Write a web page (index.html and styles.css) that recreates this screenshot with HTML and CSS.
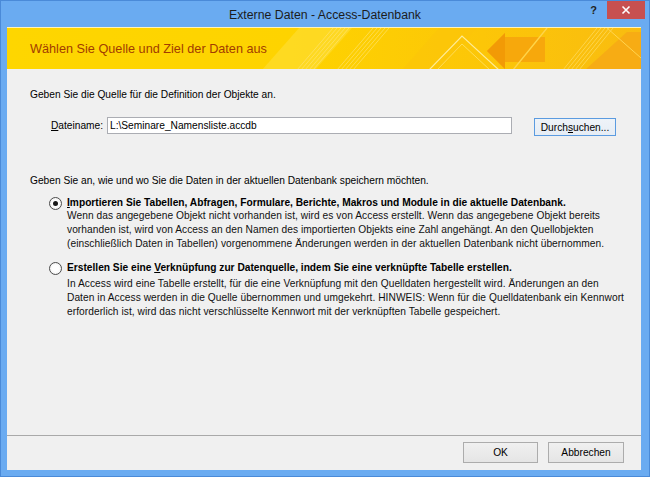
FILE: index.html
```html
<!DOCTYPE html>
<html lang="de">
<head>
<meta charset="utf-8">
<title>Externe Daten - Access-Datenbank</title>
<link rel="stylesheet" href="styles.css">
</head>
<body>
<div class="window">
  <div class="titlebar">
    <div class="title">Externe Daten - Access-Datenbank</div>
    <div class="controls">
      <span class="help">?</span>
      <span class="close"><svg width="10" height="10" viewBox="0 0 10 10"><path d="M1.5 1.5 L8.5 8.5 M8.5 1.5 L1.5 8.5" stroke="#fff" stroke-width="1.6" fill="none"/></svg></span>
    </div>
  </div>
  <div class="client">
    <div class="banner">
      <svg class="banner-art" width="634" height="42" viewBox="0 0 634 42">
        <defs>
          <linearGradient id="bg" x1="0" x2="1" y1="0" y2="0">
            <stop offset="0" stop-color="#fed600"/>
            <stop offset="0.45" stop-color="#fed300"/>
            <stop offset="0.75" stop-color="#fcc608"/>
            <stop offset="1" stop-color="#f9bc10"/>
          </linearGradient>
        </defs>
        <rect width="634" height="42" fill="url(#bg)"/>
        <polygon points="255,42 292,0 345,0 308,42" fill="#ffe24a" opacity="0.45"/>
        <g stroke="#ffe577" stroke-width="0.8" opacity="0.8">
          <line x1="290" y1="42" x2="326" y2="0"/>
          <line x1="294" y1="42" x2="330" y2="0"/>
          <line x1="298" y1="42" x2="334" y2="0"/>
          <line x1="302" y1="42" x2="338" y2="0"/>
          <line x1="306" y1="42" x2="342" y2="0"/>
          <line x1="330" y1="42" x2="366" y2="0"/>
          <line x1="334" y1="42" x2="370" y2="0"/>
          <line x1="338" y1="42" x2="374" y2="0"/>
          <line x1="342" y1="42" x2="378" y2="0"/>
          <line x1="346" y1="42" x2="382" y2="0"/>
        </g>
        <polygon points="395,42 432,0 470,0 433,42" fill="#fbc40a" opacity="0.5"/>
        <polyline points="422,42 455,8 492,42" fill="none" stroke="#ffec96" stroke-width="1.2"/>
        <polyline points="430,42 455,16 483,42" fill="none" stroke="#ffe36a" stroke-width="0.8"/>
        <polygon points="480,23 498,5 498,9 538,9 538,34 498,34 498,41" fill="#f7a80c"/>
        <polygon points="480,23 498,5 498,41" fill="#f29a06"/>
        <line x1="506" y1="42" x2="540" y2="0" stroke="#ffd54a" stroke-width="1.4"/>
        <g stroke="#ffe06a" stroke-width="0.8" opacity="0.85">
          <line x1="556" y1="42" x2="590" y2="0"/>
          <line x1="560" y1="42" x2="594" y2="0"/>
          <line x1="564" y1="42" x2="598" y2="0"/>
          <line x1="568" y1="42" x2="602" y2="0"/>
          <line x1="572" y1="42" x2="606" y2="0"/>
        </g>
        <polygon points="578,42 620,4 634,4 634,42" fill="#f7ac14"/>
        <line x1="600" y1="0" x2="634" y2="30" stroke="#ffd450" stroke-width="1"/>
      </svg>
      <h1 class="banner-title">Wählen Sie Quelle und Ziel der Daten aus</h1>
    </div>

    <div class="content">
      <p class="intro">Geben Sie die Quelle für die Definition der Objekte an.</p>
      <div class="file-row">
        <label class="file-label"><u>D</u>ateiname:</label>
        <div class="file-input">L:\Seminare_Namensliste.accdb</div>
        <button class="btn btn-browse">Durch<u>s</u>uchen...</button>
      </div>
      <p class="intro intro-2">Geben Sie an, wie und wo Sie die Daten in der aktuellen Datenbank speichern möchten.</p>

      <div class="option option-1">
        <span class="radio checked"></span>
        <div class="option-text">
          <div class="option-title"><u>I</u>mportieren Sie Tabellen, Abfragen, Formulare, Berichte, Makros und Module in die aktuelle Datenbank.</div>
          <div class="option-desc">Wenn das angegebene Objekt nicht vorhanden ist, wird es von Access erstellt. Wenn das angegebene Objekt bereits<br>vorhanden ist, wird von Access an den Namen des importierten Objekts eine Zahl angehängt. An den Quellobjekten<br>(einschließlich Daten in Tabellen) vorgenommene Änderungen werden in der aktuellen Datenbank nicht übernommen.</div>
        </div>
      </div>

      <div class="option option-2">
        <span class="radio"></span>
        <div class="option-text">
          <div class="option-title">Erstellen Sie eine <u>V</u>erknüpfung zur Datenquelle, indem Sie eine verknüpfte Tabelle erstellen.</div>
          <div class="option-desc">In Access wird eine Tabelle erstellt, für die eine Verknüpfung mit den Quelldaten hergestellt wird. Änderungen an den<br>Daten in Access werden in die Quelle übernommen und umgekehrt. HINWEIS: Wenn für die Quelldatenbank ein Kennwort<br>erforderlich ist, wird das nicht verschlüsselte Kennwort mit der verknüpften Tabelle gespeichert.</div>
        </div>
      </div>
    </div>

    <div class="footer">
      <button class="btn btn-ok">OK</button>
      <button class="btn btn-cancel">Abbrechen</button>
    </div>
  </div>
</div>
</body>
</html>
```

FILE: styles.css
```css
* { box-sizing: border-box; }

html, body {
  margin: 0;
  padding: 0;
}

body {
  font-family: "Liberation Sans", Arial, sans-serif;
  color: #000;
  background: #6aabf1;
}

.window {
  width: 650px;
  height: 477px;
  border: 1px solid #4a8ad8;
  background: #6aabf1;
  display: flex;
  flex-direction: column;
}

.titlebar {
  height: 26px;
  flex: none;
  display: grid;
  grid-template-columns: 1fr auto 1fr;
  align-items: center;
}

.title {
  grid-column: 2;
  font-size: 12.3px;
  color: #1c1c1c;
  padding-top: 1px;
}

.controls {
  grid-column: 3;
  justify-self: end;
  align-self: start;
  display: flex;
  align-items: flex-start;
  margin-right: 4px;
}

.help {
  font-weight: bold;
  font-size: 11px;
  color: #222;
  margin: 3px 10px 0 0;
}

.close {
  width: 38px;
  height: 18px;
  background: #c75050;
  display: flex;
  align-items: center;
  justify-content: center;
}

.client {
  flex: 1;
  margin: 0 8px 6px 6px;
  background: #f0f0f0;
  display: flex;
  flex-direction: column;
}

.banner {
  height: 42px;
  flex: none;
  display: grid;
  border-top: 1px solid #fff3b8;
  overflow: hidden;
}

.banner-art {
  grid-area: 1 / 1;
  display: block;
}

.banner-title {
  grid-area: 1 / 1;
  align-self: center;
  margin: 0 0 0 23px;
  font-size: 12.7px;
  font-weight: normal;
  color: #a23c00;
  position: relative;
}

.content {
  flex: 1;
  padding: 18px 0 0 23px;
  font-size: 10.2px;
}

.intro {
  margin: 0;
  line-height: 16px;
}

.file-row {
  display: flex;
  align-items: flex-start;
  margin: 14px 0 0 21px;
}

.file-label {
  width: 56px;
  line-height: 17px;
}

.file-input {
  width: 405px;
  height: 17px;
  border: 1px solid #abadb3;
  background: #fff;
  line-height: 15px;
  padding-left: 2px;
}

.btn {
  font-family: inherit;
  font-size: 10.2px;
  color: #000;
  border: 1px solid #acacac;
  background: linear-gradient(#f0f0f0, #e5e5e5);
  padding: 0;
  margin: 0;
}

.btn-browse {
  width: 82px;
  height: 18px;
  margin: 1px 0 0 22px;
  border-color: #5b9be0;
  background: linear-gradient(#eef3f8, #e6edf5);
}

.intro-2 {
  margin-top: 37px;
}

.option {
  display: flex;
  align-items: flex-start;
  gap: 5px;
  margin-left: 19px;
}

.option-1 { margin-top: 8px; }
.option-2 { margin-top: 11px; }

.radio {
  flex: none;
  width: 13px;
  height: 13px;
  margin-top: -0.5px;
  border: 1px solid #4c4c4c;
  border-radius: 50%;
  background: radial-gradient(circle, #fff 40%, #e8e8e8 100%);
  display: flex;
  align-items: center;
  justify-content: center;
}

.radio.checked::after {
  content: "";
  width: 5px;
  height: 5px;
  border-radius: 50%;
  background: #1a1a1a;
}

.option-title {
  font-weight: bold;
  line-height: 12px;
  white-space: nowrap;
}

.option-desc {
  line-height: 14px;
  white-space: nowrap;
  color: #111;
  letter-spacing: 0.05px;
}

.option-2 .option-desc {
  margin-top: 3px;
}

.footer {
  height: 35px;
  flex: none;
  border-top: 1px solid #a9a9a9;
  display: flex;
  justify-content: flex-end;
  align-items: flex-start;
  gap: 10px;
  padding: 6px 17px 0 0;
}

.btn-ok {
  width: 75px;
  height: 21px;
}

.btn-cancel {
  width: 76px;
  height: 21px;
}
```
